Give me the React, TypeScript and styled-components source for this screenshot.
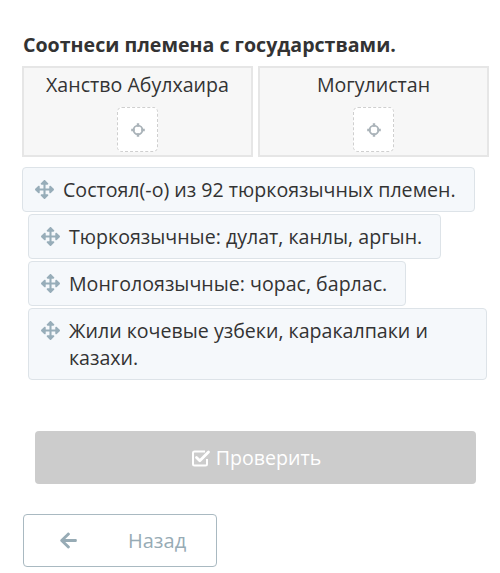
import React from "react";
import styled, { createGlobalStyle } from "styled-components";
import { FaArrowsAlt, FaArrowLeft } from "react-icons/fa";

const GlobalStyle = createGlobalStyle`
  html, body {
    margin: 0;
    padding: 0;
    background: #ffffff;
  }
  body {
    font-family: "Open Sans", "Liberation Sans", sans-serif;
    color: #333333;
  }
`;

const Page = styled.div`
  width: 500px;
  height: 573px;
  box-sizing: border-box;
  padding: 32px 12px 0 22px;
  overflow: hidden;
`;

const Title = styled.h2`
  margin: 0 0 8px 1px;
  font-size: 19.6px;
  font-weight: 700;
  line-height: 26px;
  color: #333333;
`;

const CategoryRow = styled.div`
  display: grid;
  grid-template-columns: 231px 231px;
  gap: 5px;
`;

const Category = styled.div`
  height: 91px;
  box-sizing: border-box;
  background: #f7f7f7;
  border: 2px solid #e6e6e6;
  display: flex;
  flex-direction: column;
  align-items: center;
  padding-top: 4px;
`;

const CategoryName = styled.div`
  font-size: 19.6px;
  line-height: 26px;
  color: #333333;
`;

const DropSlot = styled.div`
  margin-top: 9px;
  width: 41px;
  height: 45px;
  box-sizing: border-box;
  border: 1px dashed #cfcfcf;
  border-radius: 5px;
  background: #ffffff;
  display: flex;
  align-items: center;
  justify-content: center;
`;

const ItemList = styled.div`
  margin-top: 10px;
  display: flex;
  flex-direction: column;
  align-items: flex-start;
  gap: 2px;
`;

const Item = styled.div<{ $indent?: number }>`
  display: flex;
  align-items: flex-start;
  gap: 9px;
  box-sizing: border-box;
  max-width: 459px;
  margin-left: ${(p) => p.$indent || 0}px;
  padding: 8px 18px 8px 12px;
  background: #f5f8fb;
  border: 1px solid #dde3e8;
  border-radius: 4px;
  font-size: 19.6px;
  line-height: 27px;
  color: #333333;
`;

const Grip = styled.span`
  display: flex;
  align-items: center;
  height: 27px;
  color: #97adb9;
  flex-shrink: 0;
`;

const CheckButton = styled.button`
  margin: 51px 0 0 13px;
  width: 441px;
  height: 53px;
  border: none;
  border-radius: 4px;
  background: #cccccc;
  color: #ffffff;
  font-family: "Open Sans", "Liberation Sans", sans-serif;
  font-size: 19.6px;
  display: flex;
  align-items: center;
  justify-content: center;
  gap: 5px;
`;

const BackButton = styled.button`
  margin: 30px 0 0 1px;
  width: 194px;
  height: 53px;
  box-sizing: border-box;
  border: 1px solid #a9b9c1;
  border-radius: 4px;
  background: #ffffff;
  color: #97abb5;
  font-family: "Open Sans", "Liberation Sans", sans-serif;
  font-size: 20px;
  display: flex;
  align-items: center;
  padding: 0 0 0 35px;
  gap: 50px;
`;

const TargetIcon = () => (
  <svg width="16" height="16" viewBox="0 0 16 16">
    <circle cx="8" cy="8" r="4.4" fill="none" stroke="#aab3b9" strokeWidth="1.9" />
    <path d="M8 1.2v3.5M8 11.3v3.5M1.2 8h3.5M11.3 8h3.5" stroke="#aab3b9" strokeWidth="2.4" />
  </svg>
);

const CheckSquareIcon = () => (
  <svg width="21" height="21" viewBox="0 0 21 21" fill="none" stroke="#ffffff">
    <path d="M15 4.5H4.5a1.5 1.5 0 0 0-1.5 1.5v11a1.5 1.5 0 0 0 1.5 1.5h11a1.5 1.5 0 0 0 1.5-1.5v-5" strokeWidth="2" />
    <path d="M6.5 10.5l3.3 3.3L18.5 5" strokeWidth="2.8" strokeLinecap="round" strokeLinejoin="round" />
  </svg>
);

const categories = ["Ханство Абулхаира", "Могулистан"];

const items = [
  { text: "Состоял(-о) из 92 тюркоязычных племен.", indent: 0 },
  { text: "Тюркоязычные: дулат, канлы, аргын.", indent: 6 },
  { text: "Монголоязычные: чорас, барлас.", indent: 6 },
  { text: "Жили кочевые узбеки, каракалпаки и казахи.", indent: 6 },
];

export default function App() {
  return (
    <>
      <GlobalStyle />
      <Page>
        <Title>Соотнеси племена с государствами.</Title>
        <CategoryRow>
          {categories.map((c) => (
            <Category key={c}>
              <CategoryName>{c}</CategoryName>
              <DropSlot>
                <TargetIcon />
              </DropSlot>
            </Category>
          ))}
        </CategoryRow>
        <ItemList>
          {items.map((it) => (
            <Item key={it.text} $indent={it.indent}>
              <Grip>
                <FaArrowsAlt size={19} />
              </Grip>
              <span>{it.text}</span>
            </Item>
          ))}
        </ItemList>
        <CheckButton>
          <CheckSquareIcon />
          Проверить
        </CheckButton>
        <BackButton>
          <FaArrowLeft size={19} />
          Назад
        </BackButton>
      </Page>
    </>
  );
}
